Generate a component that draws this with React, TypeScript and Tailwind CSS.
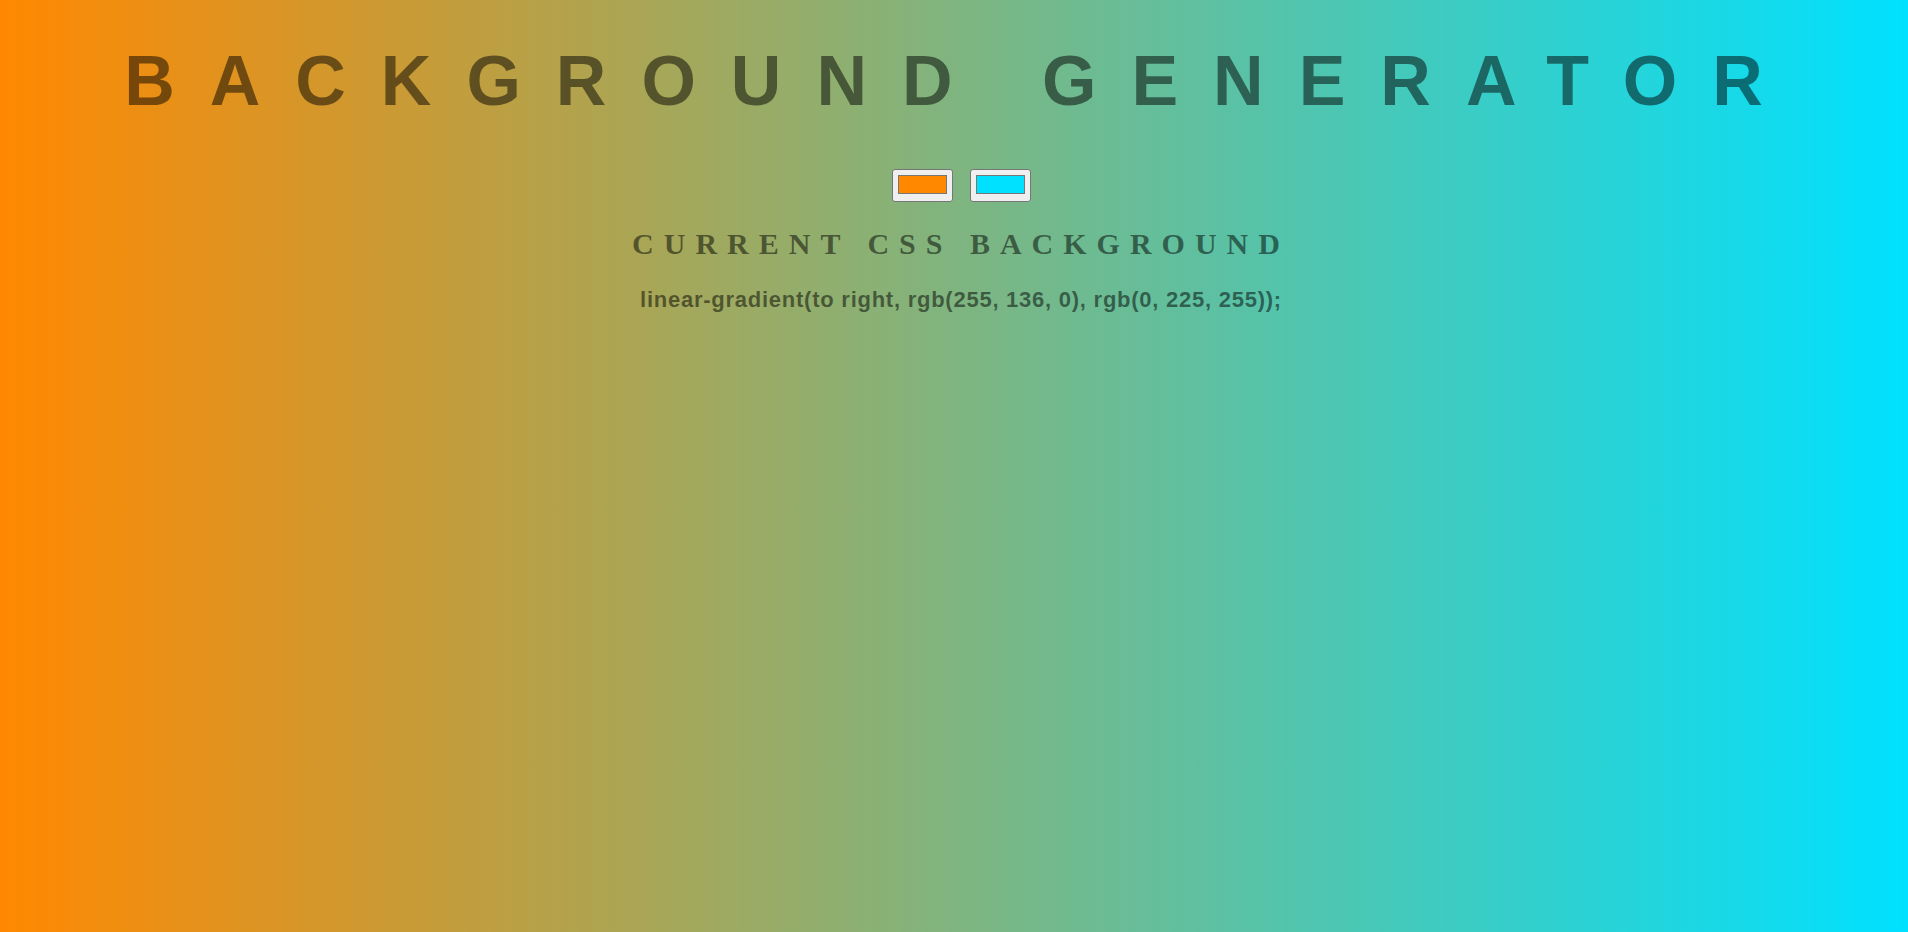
import React from "react";

function Swatch({ color }: { color: string }) {
  return (
    <div className="w-[61px] h-[33px] box-border border border-[#767676] bg-[#efefef] rounded-[3px] pt-[5px] px-[5px] pb-[7px]">
      <div className="w-full h-full box-border border border-[#777777]" style={{ backgroundColor: color }} />
    </div>
  );
}

export default function App() {
  return (
    <div className="min-h-screen w-full bg-[linear-gradient(to_right,#ff8800,#00e1ff)] pl-[14px] flex flex-col items-center text-center text-black/50">
      <h1 className="mt-[41px] text-[70px] leading-[80px] font-bold tracking-[35px] whitespace-nowrap font-['Liberation_Sans',Arial,sans-serif]">
        BACKGROUND GENERATOR
      </h1>
      <div className="mt-[48px] flex gap-[17px]">
        <Swatch color="#ff8800" />
        <Swatch color="#00e1ff" />
      </div>
      <h3 className="mt-[25px] text-[30px] leading-[34px] font-bold tracking-[10px] whitespace-nowrap font-['Liberation_Serif','Times_New_Roman',serif]">
        CURRENT CSS BACKGROUND
      </h3>
      <p className="mt-[27px] text-[22px] leading-[24px] font-bold tracking-[0.75px] whitespace-nowrap font-['Liberation_Sans',Arial,sans-serif]">
        linear-gradient(to right, rgb(255, 136, 0), rgb(0, 225, 255));
      </p>
    </div>
  );
}
